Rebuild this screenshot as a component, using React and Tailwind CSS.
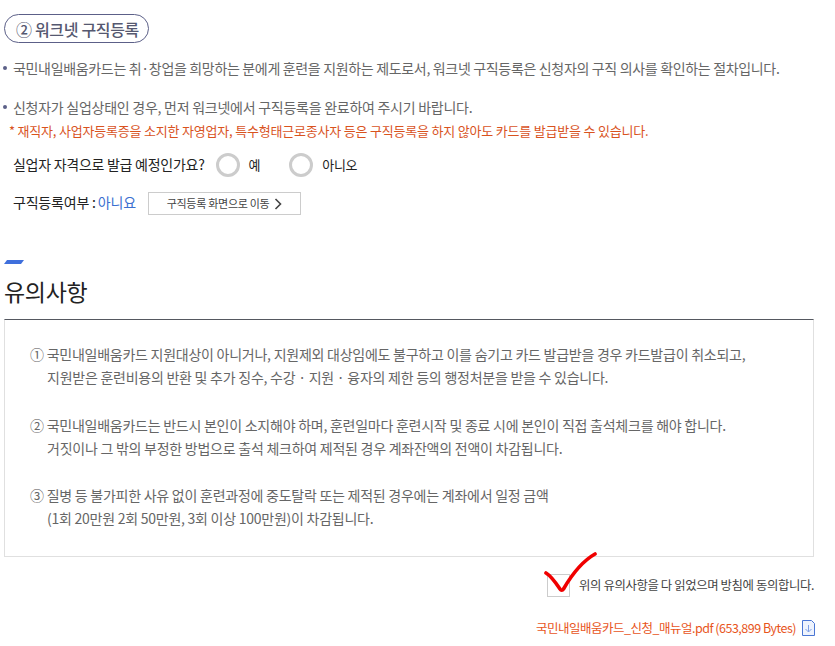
import React from "react";

const notices = [
  ["① 국민내일배움카드 지원대상이 아니거나, 지원제외 대상임에도 불구하고 이를 숨기고 카드 발급받을 경우 카드발급이 취소되고,", "지원받은 훈련비용의 반환 및 추가 징수, 수강 · 지원 · 융자의 제한 등의 행정처분을 받을 수 있습니다."],
  ["② 국민내일배움카드는 반드시 본인이 소지해야 하며, 훈련일마다 훈련시작 및 종료 시에 본인이 직접 출석체크를 해야 합니다.", "거짓이나 그 밖의 부정한 방법으로 출석 체크하여 제적된 경우 계좌잔액의 전액이 차감됩니다."],
  ["③ 질병 등 불가피한 사유 없이 훈련과정에 중도탈락 또는 제적된 경우에는 계좌에서 일정 금액", "(1회 20만원 2회 50만원, 3회 이상 100만원)이 차감됩니다."],
];

const Radio = ({ label, className }) => (
  <span className={`flex items-center ${className}`}>
    <span className="block w-6 h-6 rounded-full border-[3px] border-[#cccccc] bg-white" />
    <span className="ml-[9px] text-[13px] text-[#222222]">{label}</span>
  </span>
);

const App = () => {
  return (
    <div className="w-[835px] h-[646px] overflow-hidden bg-white text-[#666666] font-['Noto_Sans_CJK_KR',sans-serif] tracking-[-0.33px]">
      <div className="pl-1 pt-[14px]">
        <h3 className="inline-flex items-center h-[29px] pl-[11px] pr-[9px] border border-[#5c6088] rounded-full text-[16px] font-medium text-[#555870]">
          ② 워크넷 구직등록
        </h3>
      </div>

      <p className="mt-[15px] pl-[3px] flex items-center h-5 text-[14px]">
        <span className="w-1 h-1 mr-[6px] rounded-full bg-[#5c6088]" />
        국민내일배움카드는 취·창업을 희망하는 분에게 훈련을 지원하는 제도로서, 워크넷 구직등록은 신청자의 구직 의사를 확인하는 절차입니다.
      </p>
      <p className="mt-[19px] pl-[3px] flex items-center h-5 text-[14px] tracking-[-0.26px]">
        <span className="w-1 h-1 mr-[6px] rounded-full bg-[#5c6088]" />
        신청자가 실업상태인 경우, 먼저 워크넷에서 구직등록을 완료하여 주시기 바랍니다.
      </p>
      <p className="mt-1 pl-[9px] h-5 leading-5 text-[13px] tracking-[-0.2px] text-[#d9531e]">
        * 재직자, 사업자등록증을 소지한 자영업자, 특수형태근로종사자 등은 구직등록을 하지 않아도 카드를 발급받을 수 있습니다.
      </p>

      <div className="mt-3 pl-[13px] flex items-center h-6 text-[14px] tracking-[-0.27px] text-[#222222]">
        <span className="pb-[2px]">실업자 자격으로 발급 예정인가요?</span>
        <Radio label="예" className="ml-[11px]" />
        <Radio label="아니오" className="ml-[29px]" />
      </div>

      <div className="mt-[15px] pl-[13px] flex items-center h-[23px] text-[14px] text-[#222222]">
        <span className="pb-[3px] tracking-[-0.2px]">구직등록여부 : </span>
        <span className="ml-[2px] pb-[3px] tracking-[-0.1px] text-[#3a6fd0]">아니요</span>
        <button className="ml-3 w-[153px] h-[23px] flex items-center justify-center border border-[#cccccc] text-[11px] tracking-[-0.28px] text-[#444444]">
          구직등록 화면으로 이동
          <svg width="8" height="12" viewBox="0 0 8 12" className="ml-[5px]" fill="none" stroke="#444444" strokeWidth="1.6">
            <path d="M1.5 1l5 5-5 5" />
          </svg>
        </button>
      </div>

      <div className="mt-[45px] ml-1 w-5 h-1 bg-[#3f6fdc] [clip-path:polygon(15%_0,100%_0,85%_100%,0_100%)]" />
      <h2 className="mt-[7px] pl-1 h-[40px] leading-[40px] text-[23px] font-normal text-[#222222]">유의사항</h2>

      <div className="mt-2 ml-1 w-[810px] h-[238px] border border-[#e0e0e0] border-t-[#555860] pl-[25px] pt-[23px] text-[14px] tracking-[-0.25px] text-[#666666]">
        {notices.map(([first, second]) => (
          <div key={first} className="mb-[24.5px] leading-[23px]">
            <p>{first}</p>
            <p className="pl-[17px]">{second}</p>
          </div>
        ))}
      </div>

      <div className="relative mt-[17px] pr-[21px] flex items-center justify-end h-[23px] text-[12.4px] tracking-[-0.4px] text-[#444444]">
        <span className="block w-[23px] h-[23px] mr-[9px] border border-[#cccccc] bg-white" />
        <span>위의 유의사항을 다 읽었으며 방침에 동의합니다.</span>
        <svg className="absolute left-[541px] top-[-23px]" width="56" height="46" viewBox="0 0 56 46" fill="none" stroke="#f00000" strokeWidth="3.6" strokeLinecap="round" strokeLinejoin="round">
          <path d="M5 22c5 3 10 10 14 16 1 1.500 2.500 1.500 3.500 0C30 25 40 11 54 3" />
        </svg>
      </div>

      <div className="mt-5 pr-5 flex items-center justify-end h-[22px] text-[12.5px] tracking-[-0.5px] text-[#e8551c]">
        <span>국민내일배움카드_신청_매뉴얼.pdf (653,899 Bytes)</span>
        <svg className="ml-[6px]" width="13" height="16" viewBox="0 0 13 16" fill="none">
          <path d="M.5.5h9l3 3v12H.5z" stroke="#4a76d4" fill="#eef3fd" />
          <path d="M6.5 5v7M3.5 9l3 3 3-3" stroke="#7fa0e6" />
        </svg>
      </div>
    </div>
  );
};

export default App;
